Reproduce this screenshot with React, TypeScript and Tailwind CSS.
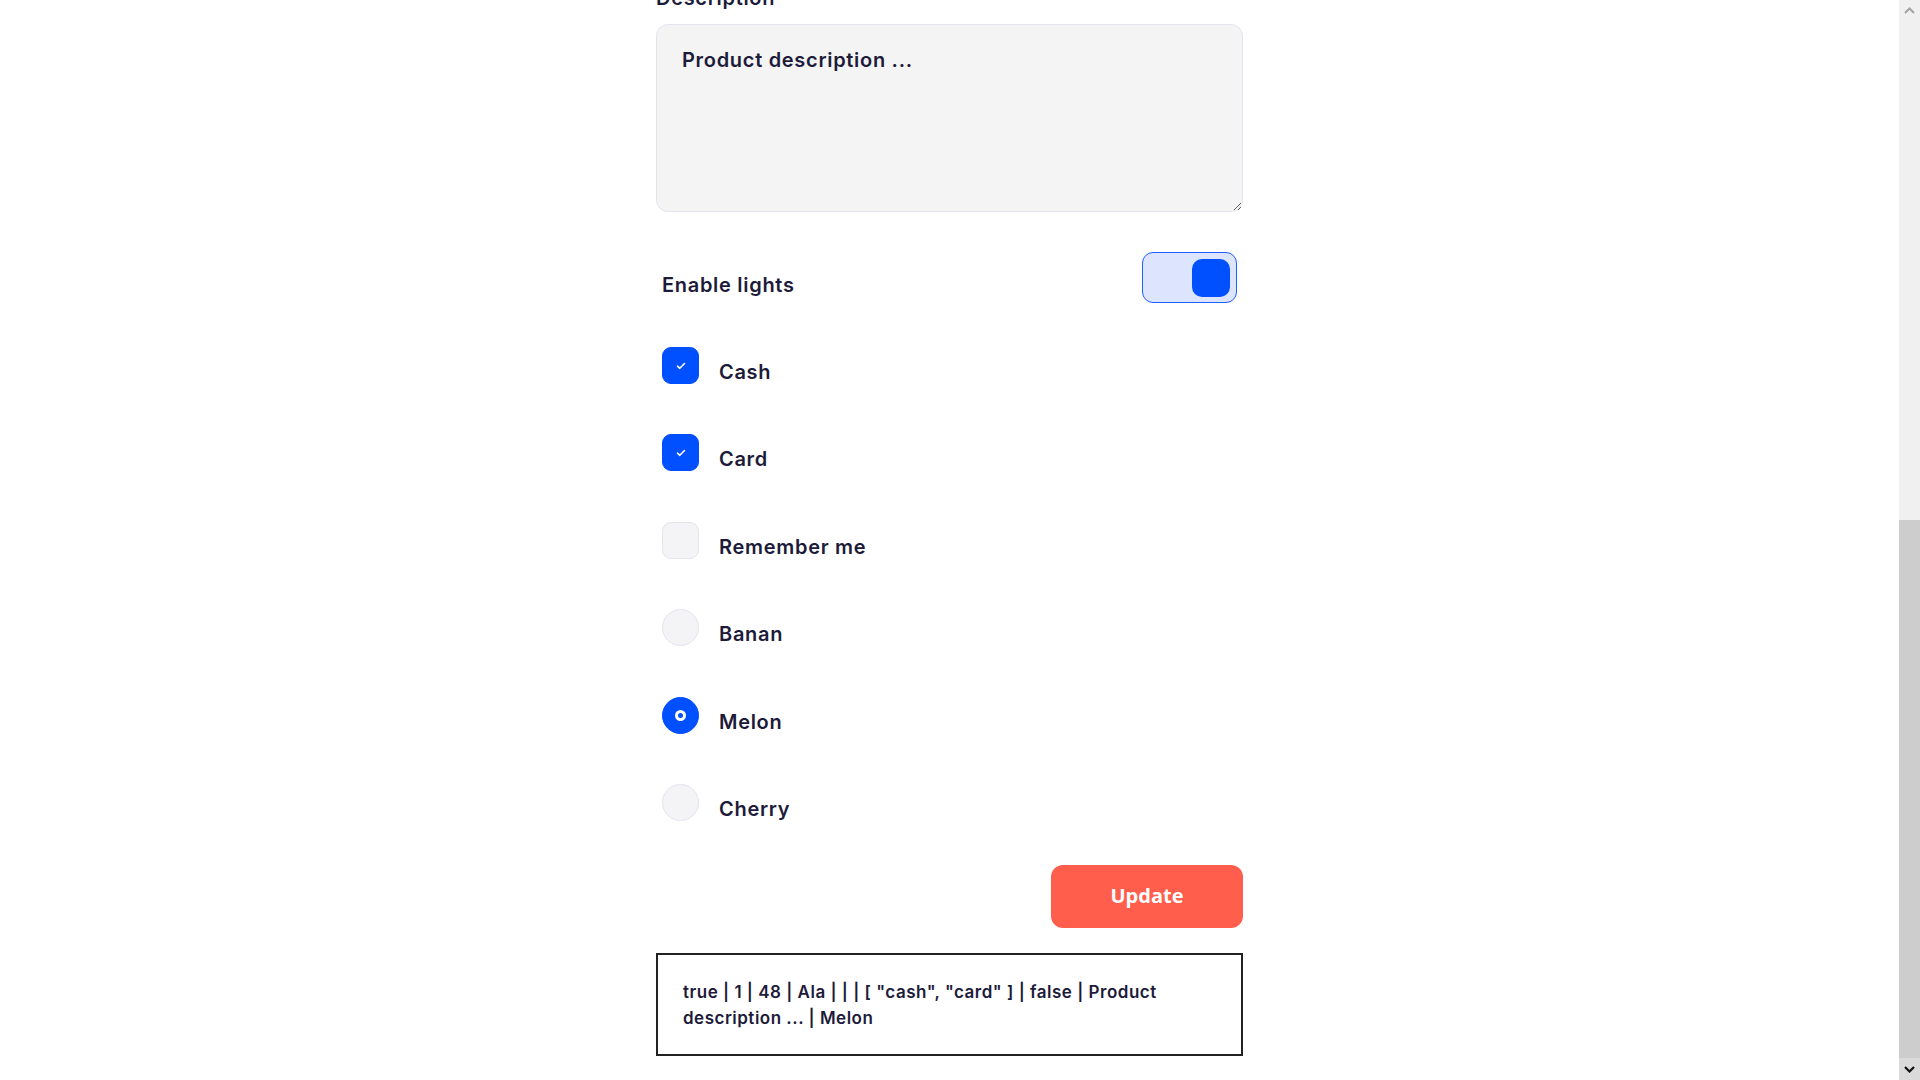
import { useLayoutEffect, useRef, useState } from "react";

const ink = "text-[#1d1b3a]";
const body = `text-[20px] leading-[28px] font-semibold tracking-[0.7px] ${ink}`;

function Field({ label, children }: { label: string; children: React.ReactNode }) {
  return (
    <div className="flex flex-col">
      <span className={`mb-[12px] ${body}`}>{label}</span>
      {children}
    </div>
  );
}

function CheckRow({ label, checked, onToggle }: { label: string; checked: boolean; onToggle: () => void }) {
  return (
    <label className="flex h-[37px] cursor-pointer items-start gap-[20px]" onClick={onToggle}>
      <span
        className={`flex h-[37px] w-[37px] shrink-0 items-center justify-center rounded-[9px] border ${
          checked ? "border-[#0050ff] bg-[#0050ff]" : "border-[#e4e4ee] bg-[#f4f4f6]"
        }`}
      >
        {checked && (
          <svg width="10" height="8" viewBox="0 0 10 8" fill="none">
            <path d="M1.5 4.2 3.8 6.3 8.5 1.5" stroke="white" strokeWidth="1.6" strokeLinecap="round" strokeLinejoin="round" />
          </svg>
        )}
      </span>
      <span className={`mt-[11px] ${body}`}>{label}</span>
    </label>
  );
}

function RadioRow({ label, checked, onPick }: { label: string; checked: boolean; onPick: () => void }) {
  return (
    <label className="flex h-[37px] cursor-pointer items-start gap-[20px]" onClick={onPick}>
      <span
        className={`flex h-[37px] w-[37px] shrink-0 items-center justify-center rounded-full border ${
          checked ? "border-[#0050ff] bg-[#0050ff]" : "border-[#e4e4ee] bg-[#f4f4f6]"
        }`}
      >
        {checked && <span className="h-[11px] w-[11px] rounded-full border-[3px] border-white" />}
      </span>
      <span className={`mt-[11px] ${body}`}>{label}</span>
    </label>
  );
}

// page scrollbar, drawn since the browser hides its own
function Scrollbar() {
  return (
    <div className="flex h-screen w-[21px] shrink-0 flex-col bg-[#f0f0f0]">
      <div className="flex h-[21px] items-center justify-center">
        <svg width="11" height="7" viewBox="0 0 11 7">
          <path d="M1 6 5.5 1.5 10 6" fill="none" stroke="#a3a3a3" strokeWidth="2" />
        </svg>
      </div>
      <div className="h-[499px]" />
      <div className="h-[538px] bg-[#cdcdcd]" />
      <div className="flex h-[22px] items-center justify-center bg-[#dadada]">
        <svg width="11" height="7" viewBox="0 0 11 7">
          <path d="M1 1 5.5 5.5 10 1" fill="none" stroke="#111" strokeWidth="2.2" />
        </svg>
      </div>
    </div>
  );
}

export default function App() {
  const scrollRef = useRef<HTMLDivElement>(null);
  const [lights, setLights] = useState(true);
  const [qty] = useState(1);
  const [age] = useState(48);
  const [name] = useState("Ala");
  const [email] = useState("");
  const [password] = useState("");
  const [payments, setPayments] = useState<string[]>(["cash", "card"]);
  const [remember, setRemember] = useState(false);
  const [description, setDescription] = useState("Product description ...");
  const [fruit, setFruit] = useState("Melon");

  useLayoutEffect(() => {
    const el = scrollRef.current;
    if (el) el.scrollTop = el.scrollHeight;
  }, []);

  const togglePayment = (p: string) =>
    setPayments((cur) => (cur.includes(p) ? cur.filter((x) => x !== p) : [...cur, p]));

  const summary = `${lights} | ${qty} | ${age} | ${name} | ${email} | ${password} | [ ${payments
    .map((p) => `"${p}"`)
    .join(", ")} ] | ${remember} | ${description} | ${fruit}`;

  const inputCls = `h-[60px] w-full rounded-[12px] border border-[#e3e3ee] bg-[#f4f4f5] px-[25px] outline-none ${body}`;

  return (
    <div className="flex h-screen bg-white font-['Inter',sans-serif]">
      <div ref={scrollRef} className="h-screen flex-1 overflow-y-scroll [scrollbar-width:none]">
        <div className="flex justify-center">
          <form className="flex w-[587px] flex-col pb-[24px]" onSubmit={(e) => e.preventDefault()}>
            {/* upper part of the form, scrolled out of view */}
            <div className="flex flex-col gap-[40px] pt-[120px] pb-[40px]">
              <h1 className={`mb-[60px] text-[32px] leading-[40px] font-semibold ${ink}`}>Edit product</h1>
              <Field label="Quantity">
                <input type="number" defaultValue={qty} className={inputCls} />
              </Field>
              <Field label="Age">
                <input type="number" defaultValue={age} className={inputCls} />
              </Field>
              <Field label="Name">
                <input type="text" defaultValue={name} className={inputCls} />
              </Field>
              <Field label="Email">
                <input type="email" defaultValue={email} className={inputCls} />
              </Field>
              <Field label="Password">
                <input type="password" defaultValue={password} className={inputCls} />
              </Field>
            </div>

            <Field label="Description">
              <textarea
                value={description}
                onChange={(e) => setDescription(e.target.value)}
                className={`h-[188px] w-full rounded-[12px] border border-[#e3e3ee] bg-[#f4f4f5] px-[25px] pt-[21px] outline-none ${body}`}
              />
            </Field>

            <div className="mt-[40px] flex items-start justify-between px-[6px]">
              <span className={`mt-[19px] ${body}`}>Enable lights</span>
              <button
                type="button"
                onClick={() => setLights(!lights)}
                className={`flex h-[51px] w-[95px] items-center rounded-[11px] border-[1.5px] border-[#1f5fff] bg-[#dce5fd] px-[6px] ${
                  lights ? "justify-end" : "justify-start"
                }`}
              >
                <span className="h-[38px] w-[38px] rounded-[10px] bg-[#0050ff]" />
              </button>
            </div>

            <div className="mt-[44px] flex flex-col gap-[50.4px] px-[6px]">
              <CheckRow label="Cash" checked={payments.includes("cash")} onToggle={() => togglePayment("cash")} />
              <CheckRow label="Card" checked={payments.includes("card")} onToggle={() => togglePayment("card")} />
              <CheckRow label="Remember me" checked={remember} onToggle={() => setRemember(!remember)} />
              {["Banan", "Melon", "Cherry"].map((f) => (
                <RadioRow key={f} label={f} checked={fruit === f} onPick={() => setFruit(f)} />
              ))}
            </div>

            <button
              type="submit"
              className="mt-[44px] h-[63px] w-[192px] self-end rounded-[12px] bg-[#ff5e4d] font-['Open_Sans',sans-serif] text-[20px] font-bold text-white"
            >
              Update
            </button>

            <div
              className={`mt-[25px] border-2 border-[#222] px-[25px] pt-[24px] pb-[23px] text-[17px] leading-[26px] font-semibold tracking-[0.5px] ${ink}`}
            >
              {summary}
            </div>
          </form>
        </div>
      </div>
      <Scrollbar />
    </div>
  );
}
